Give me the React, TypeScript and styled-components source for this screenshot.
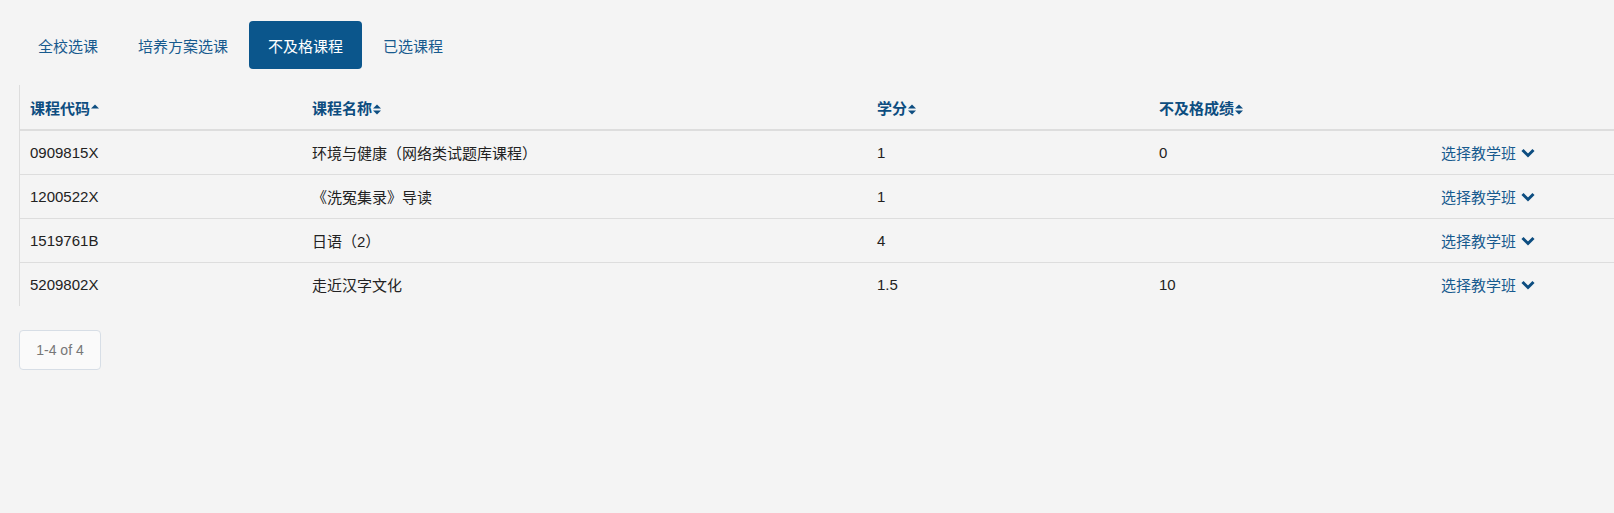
import React from "react";
import styled, { createGlobalStyle } from "styled-components";

const Global = createGlobalStyle`
  html, body { margin: 0; padding: 0; background: #f4f4f4; overflow: hidden; }
  body { font-family: "Liberation Sans", Arial, "Noto Sans CJK SC", sans-serif; font-size: 15px; color: #333; }
`;

const Page = styled.div`
  padding: 21px 0 0 19px;
  width: 1720px;
`;

const Tabs = styled.ul`
  display: flex;
  list-style: none;
  margin: 0 0 16px 0;
  padding: 0;
`;

const Tab = styled.li<{ $active?: boolean }>`
  height: 48px;
  display: flex;
  align-items: center;
  padding: 0 19px;
  margin-right: 2px;
  border-radius: 4px;
  font-size: 15px;
  color: ${p => (p.$active ? "#fff" : "#175a8e")};
  background: ${p => (p.$active ? "#0b568c" : "transparent")};
`;

const TableBox = styled.div`
  border-left: 1px solid #dddddd;
  width: 1692px;
`;

const Table = styled.table`
  width: 1692px;
  border-collapse: collapse;
  table-layout: fixed;
`;

const Th = styled.th`
  text-align: left;
  height: 44px;
  padding: 0 10px;
  font-weight: bold;
  font-size: 15px;
  color: #0d4d80;
  border-bottom: 2px solid #dddddd;
  vertical-align: middle;
  white-space: nowrap;
`;

const Td = styled.td`
  height: 43px;
  padding: 0 10px;
  color: #222;
  vertical-align: middle;
  border-top: 1px solid #dddddd;
  white-space: nowrap;
`;

const FirstRow = styled.tr`
  & > td { border-top: none; }
`;

const SortIcon = styled.svg`
  width: 8px;
  height: 11px;
  margin-left: 1px;
  vertical-align: -1px;
`;

const Action = styled.span`
  color: #175a8e;
  display: inline-flex;
  align-items: center;
  gap: 5px;
`;

const Pager = styled.div`
  margin-top: 24px;
  width: 82px;
  height: 40px;
  box-sizing: border-box;
  border: 1px solid #d7dee6;
  border-radius: 4px;
  background: #fafafa;
  color: #777;
  font-size: 14px;
  display: flex;
  align-items: center;
  justify-content: center;
`;

const SortBoth = () => (
  <SortIcon viewBox="0 0 8 11">
    <path d="M0 4.5 L4 0.5 L8 4.5 Z M0 6.5 L4 10.5 L8 6.5 Z" fill="#0d4d80" />
  </SortIcon>
);
const SortUp = () => (
  <SortIcon viewBox="0 0 8 11">
    <path d="M0 4.5 L4 0.5 L8 4.5 Z" fill="#0d4d80" />
  </SortIcon>
);
const Chevron = () => (
  <svg width="14" height="10" viewBox="0 0 14 10">
    <path d="M1.5 2 L7 7.5 L12.5 2" fill="none" stroke="#0d4d80" strokeWidth="3" strokeLinejoin="miter" />
  </svg>
);

const rows = [
  ["0909815X", "环境与健康（网络类试题库课程）", "1", "0"],
  ["1200522X", "《洗冤集录》导读", "1", ""],
  ["1519761B", "日语（2）", "4", ""],
  ["5209802X", "走近汉字文化", "1.5", "10"],
];

export default function App() {
  return (
    <Page>
      <Global />
      <Tabs>
        <Tab>全校选课</Tab>
        <Tab>培养方案选课</Tab>
        <Tab $active>不及格课程</Tab>
        <Tab>已选课程</Tab>
      </Tabs>
      <TableBox>
        <Table>
          <colgroup>
            <col style={{ width: 282 }} />
            <col style={{ width: 565 }} />
            <col style={{ width: 282 }} />
            <col style={{ width: 282 }} />
            <col style={{ width: 281 }} />
          </colgroup>
          <thead>
            <tr>
              <Th>课程代码<SortUp /></Th>
              <Th>课程名称<SortBoth /></Th>
              <Th>学分<SortBoth /></Th>
              <Th>不及格成绩<SortBoth /></Th>
              <Th></Th>
            </tr>
          </thead>
          <tbody>
            {rows.map((r, i) => {
              const cells = (
                <>
                  <Td>{r[0]}</Td>
                  <Td>{r[1]}</Td>
                  <Td>{r[2]}</Td>
                  <Td>{r[3]}</Td>
                  <Td>
                    <Action>选择教学班<Chevron /></Action>
                  </Td>
                </>
              );
              return i === 0 ? <FirstRow key={i}>{cells}</FirstRow> : <tr key={i}>{cells}</tr>;
            })}
          </tbody>
        </Table>
      </TableBox>
      <Pager>1-4 of 4</Pager>
    </Page>
  );
}
